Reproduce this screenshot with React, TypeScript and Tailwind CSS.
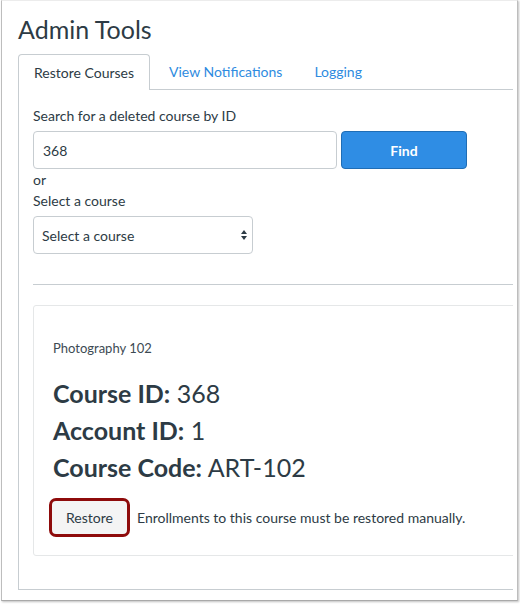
import React from "react";

export default function App() {
  return (
    <div
      className="w-[520px] h-[604px] bg-white text-[#2d3b45] overflow-hidden"
      style={{ fontFamily: "Lato, 'Open Sans', sans-serif" }}
    >
      <div className="ml-[1px] w-[517px] h-[601px] border-x border-b border-t border-t-[#ececec] border-x-[#bdbdbd] border-b-[#a9a9a9] shadow-[1px_1px_2px_rgba(0,0,0,0.25)] pl-[16px] pt-[13px] overflow-hidden">
        <h1 className="text-[25px] leading-[30px] font-normal text-[#2d3b45] tracking-[0px]">
          Admin Tools
        </h1>
        <div className="mt-[10px] w-[495px] flex items-end border-b border-[#c7cdd1] h-[36px]">
          <div className="h-[36px] -mb-[1px] px-[15px] border border-b-0 border-[#c7cdd1] rounded-t-[4px] bg-white flex items-center text-[14px] text-[#2d3b45]">
            Restore Courses
          </div>
          <div className="h-[35px] ml-[4px] px-[15px] flex items-center text-[14px] text-[#2e8be0]">
            View Notifications
          </div>
          <div className="h-[35px] ml-[2px] px-[15px] flex items-center text-[14px] text-[#2e8be0]">
            Logging
          </div>
        </div>
        <div className="w-[495px] h-[500px] border-l border-b border-[#c7cdd1] pl-[14px] pt-[16px] overflow-hidden">
          <div className="text-[14px] leading-[20px]">Search for a deleted course by ID</div>
          <div className="mt-[5px] flex">
            <div className="w-[304px] h-[38px] border border-[#c7cdd1] rounded-[4px] flex items-center pl-[9px] text-[14px]">
              368
            </div>
            <button className="ml-[4px] w-[126px] h-[38px] bg-[#2f8de4] border border-[#1f6db5] rounded-[4px] text-white font-bold text-[14px]">
              Find
            </button>
          </div>
          <div className="text-[14px] leading-[20px] mt-[1px]">or</div>
          <div className="text-[14px] leading-[20px] mt-[1px]">Select a course</div>
          <div className="mt-[5px] w-[220px] h-[38px] border border-[#c7cdd1] rounded-[4px] flex items-center justify-between pl-[8px] pr-[4px] text-[14px]">
            <span>Select a course</span>
            <svg width="8" height="12" viewBox="0 0 8 12">
              <path d="M4 1 L7 5 L1 5 Z" fill="#2d3b45" />
              <path d="M4 11 L7 7 L1 7 Z" fill="#2d3b45" />
            </svg>
          </div>
          <div className="mt-[30px] w-[495px] border-t border-[#c7cdd1]" />
          <div className="mt-[20px] w-[500px] h-[251px] border border-[#e5e7e8] rounded-[3px] pl-[19px] pt-[33px]">
            <div className="text-[13px] leading-[18px] text-[#3d4a53]">Photography 102</div>
            <div className="mt-[18px] text-[25px] leading-[37px]">
              <div>
                <span className="font-bold">Course ID:</span> 368
              </div>
              <div>
                <span className="font-bold">Account ID:</span> 1
              </div>
              <div>
                <span className="font-bold">Course Code:</span> ART-102
              </div>
            </div>
            <div className="mt-[12px] flex items-center">
              <button className="-ml-[4px] w-[81px] h-[39px] border-[3px] border-[#8e0b0b] rounded-[7px] bg-[#f4f4f4] text-[14px] text-[#2d3b45]">
                Restore
              </button>
              <span className="ml-[7px] text-[14px]">
                Enrollments to this course must be restored manually.
              </span>
            </div>
          </div>
        </div>
      </div>
    </div>
  );
}
